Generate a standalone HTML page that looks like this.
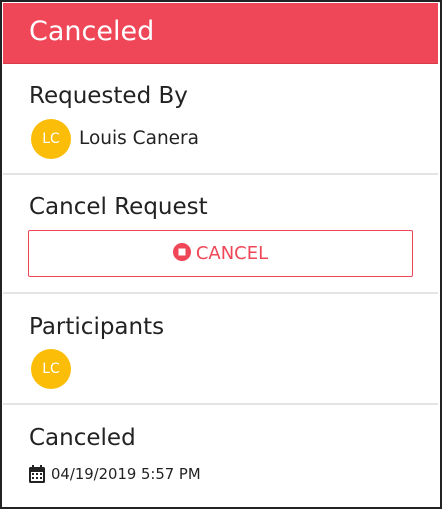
<!DOCTYPE html>
<html><head><style>
body{margin:0;width:442px;height:509px;background:#fff;font-family:"DejaVu Sans","Liberation Sans",sans-serif;position:relative;overflow:hidden}
.frame{position:absolute;left:0;top:0;width:438px;height:505px;border:2px solid #222;background:#fff}
.hdr{position:absolute;left:3px;top:3px;width:435px;height:60px;background:#ef4758;border-bottom:1px solid #d63c4c}
.a{position:absolute;white-space:nowrap}
.h{color:#fff;font-size:27px;left:29px;top:16px}
.t{color:#222;font-size:23px;left:29px}
.sep{position:absolute;left:3px;width:435px;height:2px;background:#e4e4e4}
.av{position:absolute;left:31px;width:40px;height:40px;border-radius:50%;background:#fbbd08;color:#fff;font-size:14px;text-align:center;line-height:40px}
.btn{position:absolute;left:28px;top:230px;width:383px;height:45px;border:1px solid #ef4758;border-radius:2px;color:#ef4758;font-size:18px;text-align:center;line-height:45px}
</style></head><body>
<div class="frame"></div>
<div class="hdr"></div>
<div class="a h">Canceled</div>
<div class="a t" style="top:83px">Requested By</div>
<div class="av" style="top:119px">LC</div>
<div class="a" style="left:79px;top:128px;font-size:18.5px;color:#222">Louis Canera</div>
<div class="sep" style="top:173px"></div>
<div class="a t" style="top:194px">Cancel Request</div>
<div class="btn"><svg width="18" height="18" viewBox="0 0 18 18" style="vertical-align:-2px;margin-right:5px"><circle cx="9" cy="9" r="9" fill="#ef4758"/><rect x="5.5" y="5.5" width="7" height="7" fill="#fff"/></svg>CANCEL</div>
<div class="sep" style="top:292px"></div>
<div class="a t" style="top:314px">Participants</div>
<div class="av" style="top:349px">LC</div>
<div class="sep" style="top:403px"></div>
<div class="a t" style="top:425px">Canceled</div>
<svg class="a" style="left:28px;top:464px" width="18" height="20" viewBox="0 0 18 20"><rect x="1" y="3" width="16" height="16" rx="1.5" fill="#222"/><rect x="3" y="8" width="12" height="9" fill="#fff"/><rect x="4" y="1" width="2" height="4" fill="#222"/><rect x="12" y="1" width="2" height="4" fill="#222"/><g fill="#222"><rect x="4" y="9" width="2" height="2"/><rect x="8" y="9" width="2" height="2"/><rect x="12" y="9" width="2" height="2"/><rect x="4" y="13" width="2" height="2"/><rect x="8" y="13" width="2" height="2"/><rect x="12" y="13" width="2" height="2"/></g></svg>
<div class="a" style="left:51px;top:466px;font-size:14.8px;color:#222">04/19/2019 5:57 PM</div>
</body></html>
